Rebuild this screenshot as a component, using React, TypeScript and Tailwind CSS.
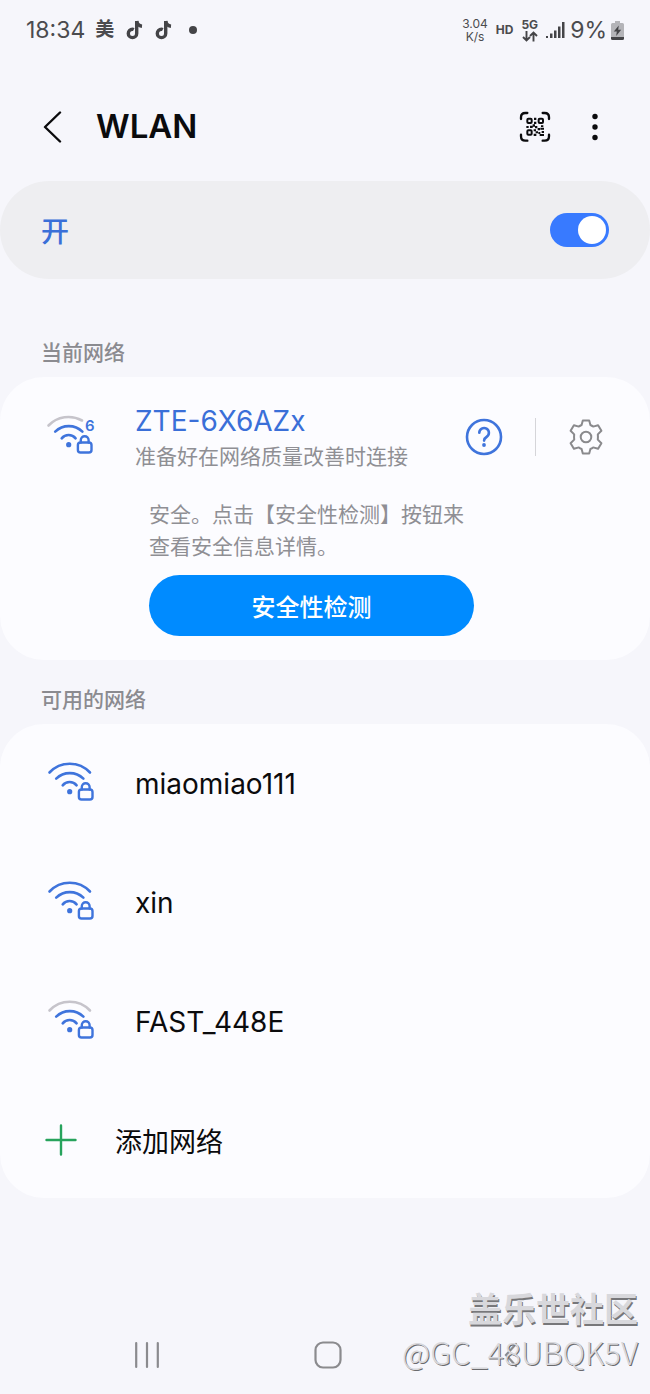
import React, { useState } from "react";

interface Network {
  name: string;
  strength: "full" | "medium";
}

const networks: Network[] = [
  { name: "miaomiao111", strength: "full" },
  { name: "xin", strength: "full" },
  { name: "FAST_448E", strength: "medium" },
];

interface WifiIconProps {
  strength: "full" | "medium";
  wifi6?: boolean;
}

const WifiIcon: React.FC<WifiIconProps> = ({ strength, wifi6 }) => {
  const outer = strength === "full" ? "#3f74dc" : "#c6c4cb";
  return (
    <svg
      className="mb-2 h-11 w-12 shrink-0 overflow-visible"
      viewBox="0 0 48 44"
      fill="none"
      stroke="#3f74dc"
      strokeWidth="2.6"
      strokeLinecap="round"
      aria-hidden="true"
    >
      {wifi6 ? (
        <path d="M2.5 14.5A27.7 27.7 0 0 1 36 9.5" stroke={outer} />
      ) : (
        <path d="M2.5 14.5A27.7 27.7 0 0 1 43 14.5" stroke={outer} />
      )}
      <path d="M9.2 20.6A19.6 19.6 0 0 1 36.4 20.6" />
      <path d="M15.7 27.3A9 9 0 0 1 29.6 27.3" />
      <circle cx="22.7" cy="33.7" r="2.6" fill="#3f74dc" stroke="none" />
      <rect x="31.9" y="31.5" width="13.6" height="10" rx="2.6" strokeWidth="2.4" />
      <path d="M34.8 31.5v-2.4a3.9 3.9 0 0 1 7.8 0v2.4" strokeWidth="2.4" />
      {wifi6 && (
        <text
          x="39"
          y="20"
          fontSize="15"
          fontWeight="600"
          fontFamily="Inter, sans-serif"
          fill="#3f74dc"
          stroke="none"
        >
          6
        </text>
      )}
    </svg>
  );
};

const NoteIcon = () => (
  <svg className="h-5 w-[18px]" viewBox="0 0 18 20" fill="none" stroke="#444447" strokeWidth="3.4" aria-hidden="true">
    <path d="M10.7 1v12.4a4.2 4.2 0 1 1-4.2-4.2c.5 0 .9 0 1.3.2" />
    <path d="M10.7 1c.3 3 2.2 4.9 5.3 5.2" />
  </svg>
);

const QrScanIcon = () => (
  <svg className="size-8" viewBox="0 0 96 96" fill="none" stroke="#0b0b0d" aria-hidden="true">
    <path
      d="M6 24v-5Q6 6 19 6h6M71 6h6q13 0 13 13v5M90 71v5q0 13-13 13h-6M25 89h-6Q6 89 6 76v-5"
      strokeWidth="7"
      strokeLinecap="round"
    />
    <g strokeWidth="6">
      <rect x="25" y="23" width="13" height="13" rx="3" />
      <rect x="59" y="23" width="13" height="13" rx="3" />
      <rect x="25" y="58" width="13" height="13" rx="3" />
    </g>
    <g fill="#0b0b0d" stroke="none">
      <path d="M45 20h7v7h-7zM45 32h7v7h-7zM22 45h7v6h-7zM33 44h8v7h-8zM41 40h7v7h-7zM48 45h7v7h-7zM56 51h7v7h-7zM64 50h11v6H64zM66 43h7v5h-7zM44 55h7v6h-7zM50 61h7v6h-7zM44 68h8v7h-8zM58 63h6v6h-6zM62 69h13v6H62zM68 60h7v6h-7z" />
    </g>
  </svg>
);

const GearIcon = () => (
  <svg
    className="size-9"
    viewBox="0 0 36 36"
    fill="none"
    stroke="#8a8a8d"
    strokeWidth="2"
    strokeLinejoin="round"
    aria-hidden="true"
  >
    <path d="M14.8 1.5h6.4l1.2 4.5q1.5.6 2.7 1.6l5-1.4 3.3 5.6-3.6 3.6q.3 2.600 0 5.200l3.600 3.600-3.300 5.600-5-1.400q-1.200 1-2.700 1.600l-1.200 4.500h-6.400l-1.200-4.500q-1.500-.6-2.700-1.600l-5 1.400-3.300-5.600 3.600-3.600q-.3-2.600 0-5.200l-3.600-3.600 3.300-5.600 5 1.400q1.200-1 2.700-1.600z" />
    <circle cx="18" cy="18" r="5.3" />
  </svg>
);

const StatusBar = () => (
  <div className="flex h-[60px] items-center justify-between px-[26px] text-[#4b4b4e]">
    <div className="flex items-center">
      <span className="text-[23px]">18:34</span>
      <span className="ml-[10px] text-[19px] font-bold">美</span>
      <span className="ml-3 flex gap-[11px]">
        <NoteIcon />
        <NoteIcon />
      </span>
      <span className="ml-4 size-2 rounded-full bg-[#444447]" />
    </div>
    <div className="flex items-center">
      <div className="text-center text-[12px] leading-[13px]">
        3.04
        <br />
        K/s
      </div>
      <span className="ml-2 text-[12px] font-bold">HD</span>
      <div className="ml-2 flex flex-col items-center text-[12px] leading-3 font-bold">
        5G
        <svg className="h-[11px] w-4" viewBox="0 0 16 11" fill="none" stroke="#444447" strokeWidth="1.9" aria-hidden="true">
          <path d="M4.500 0v9M1 6l3.500 3.500L8 6M11.500 10.500v-9M8 5l3.500-3.500L15 5" />
        </svg>
      </div>
      <svg className="ml-2 h-[18px] w-5" viewBox="0 0 20 18" fill="#444447" aria-hidden="true">
        <path d="M0 15h2v2H0zM4 12.500h2.500V17H4zM8 9.500h2.500V17H8zM12 5.500h2.500V17H12zM16 1h2.500v16H16z" />
      </svg>
      <span className="ml-1 text-[23px]">9%</span>
      <svg className="ml-1 h-[19px] w-[13px]" viewBox="0 0 13 19" aria-hidden="true">
        <path d="M4 0h5v2h2.500A1.500 1.500 0 0 1 13 3.500V16H0V3.500A1.500 1.500 0 0 1 1.500 2H4z" fill="#b4b4b8" />
        <path d="M0 16h13v1.500a1.500 1.500 0 0 1-1.500 1.500h-10A1.500 1.500 0 0 1 0 17.500z" fill="#444447" />
        <path d="M7.800 4.500 2.800 10.500h3l-.6 4.500 5-6.300H7.200z" fill="#444447" />
      </svg>
    </div>
  </div>
);

const App: React.FC = () => {
  const [enabled, setEnabled] = useState(true);

  return (
    <div className="relative flex min-h-screen flex-col bg-[#f6f6fb] font-[Inter,'Noto_Sans_CJK_SC',sans-serif] text-[#0b0b0d]">
      <StatusBar />

      <header className="mt-[30px] flex h-[74px] items-center pr-[49px] pl-[42px]">
        <button aria-label="返回">
          <svg
            className="h-8 w-5"
            viewBox="0 0 20 32"
            fill="none"
            stroke="#0b0b0d"
            strokeWidth="2.4"
            strokeLinecap="round"
            strokeLinejoin="round"
          >
            <path d="M18 1.5 3 16l15 14.5" />
          </svg>
        </button>
        <h1 className="ml-[34px] text-[33px] font-semibold">WLAN</h1>
        <button className="ml-auto" aria-label="扫描二维码">
          <QrScanIcon />
        </button>
        <button className="ml-[38px]" aria-label="更多选项">
          <svg className="h-7 w-3" viewBox="0 0 12 28" fill="#0b0b0d">
            <circle cx="6" cy="3.5" r="2.7" />
            <circle cx="6" cy="14" r="2.7" />
            <circle cx="6" cy="24.5" r="2.7" />
          </svg>
        </button>
      </header>

      <section className="mt-[17px] flex h-[98px] items-center justify-between rounded-full bg-[#eeeef1] px-[41px]">
        <label htmlFor="wlan" className="pt-1 text-[28px] font-medium text-[#3a6fd8]">
          开
        </label>
        <input
          id="wlan"
          type="checkbox"
          role="switch"
          checked={enabled}
          onChange={(e) => setEnabled(e.target.checked)}
          className="flex h-[34px] w-[59px] appearance-none items-center rounded-full bg-gray-400 px-[3px] before:size-7 before:rounded-full before:bg-white before:content-[''] checked:justify-end checked:bg-[#387aff]"
        />
      </section>

      <h2 className="mt-[58px] px-[41px] text-[21px] leading-8 font-medium text-[#8b8b90]">当前网络</h2>
      <section className="mt-2 rounded-[44px] bg-[#fcfcff] py-6">
        <div className="flex items-center px-[46px]">
          <WifiIcon strength="medium" wifi6 />
          <div className="ml-[41px]">
            <p className="text-[28px] leading-10 text-[#3a6fd8]">ZTE-6X6AZx</p>
            <p className="text-[21px] leading-8 text-[#8f8f94]">准备好在网络质量改善时连接</p>
          </div>
          <button className="ml-auto" aria-label="帮助">
            <svg className="size-[38px]" viewBox="0 0 38 38" fill="none" stroke="#3f74dc" strokeWidth="2.6" strokeLinecap="round">
              <circle cx="19" cy="19" r="17" />
              <path d="M14.300 14.800a4.800 4.800 0 1 1 7.200 4.200c-1.700 1-2.400 1.900-2.400 3.600" />
              <circle cx="19" cy="27" r="1.9" fill="#3f74dc" stroke="none" />
            </svg>
          </button>
          <span className="ml-8 h-[38px] w-px bg-[#d5d5d9]" />
          <button className="ml-8" aria-label="网络设置">
            <GearIcon />
          </button>
        </div>
        <div className="mt-[26px] px-[149px]">
          <p className="text-[21px] leading-8 whitespace-nowrap text-[#8f8f94]">
            安全。点击【安全性检测】按钮来
            <br />
            查看安全信息详情。
          </p>
          <button className="mt-3 h-[61px] w-[325px] rounded-full bg-[#008bff] pt-1 text-2xl font-medium text-white">
            安全性检测
          </button>
        </div>
      </section>

      <h2 className="mt-6 px-[41px] text-[21px] leading-8 font-medium text-[#8b8b90]">可用的网络</h2>
      <section className="mt-2 rounded-[44px] bg-[#fcfcff]">
        <ul>
          {networks.map((network) => (
            <li key={network.name}>
              <button className="flex h-[119px] w-full items-center pl-[47px] text-left text-[28px]">
                <WifiIcon strength={network.strength} />
                <span className="ml-10">{network.name}</span>
              </button>
            </li>
          ))}
        </ul>
        <button className="flex h-[117px] w-full items-center pl-[45px] text-left text-[27px]">
          <svg className="size-8" viewBox="0 0 32 32" stroke="#27a35c" strokeWidth="2.4" strokeLinecap="round" aria-hidden="true">
            <path d="M16 1.5v29M1.5 16h29" />
          </svg>
          <span className="ml-[38px] pt-2">添加网络</span>
        </button>
      </section>

      <nav className="mt-auto grid h-[78px] grid-cols-3 place-items-center pr-[50px] pl-14 text-[#8b8b8e]">
        <button aria-label="最近任务">
          <svg className="size-7" viewBox="0 0 28 28" stroke="currentColor" strokeWidth="2.2" strokeLinecap="round">
            <path d="M3.2 2v24M14 2v24M24.8 2v24" />
          </svg>
        </button>
        <button aria-label="主屏幕">
          <svg className="size-7" viewBox="0 0 28 28" fill="none" stroke="currentColor" strokeWidth="2.2">
            <rect x="1.5" y="1.5" width="25" height="25" rx="7.5" />
          </svg>
        </button>
        <button aria-label="返回上一页">
          <svg className="size-7" viewBox="0 0 28 28" fill="none" stroke="currentColor" strokeWidth="2.2" strokeLinecap="round">
            <path d="M21 3 11 14l10 11" />
          </svg>
        </button>
      </nav>

      <div className="pointer-events-none absolute right-3 bottom-5 text-right font-['Noto_Sans_CJK_SC',sans-serif] text-[#d8d8dc]">
        <p className="text-[34px] leading-[44px] font-bold [text-shadow:1px_2px_0_#77777a]">盖乐世社区</p>
        <p className="text-[31px] leading-[44px] font-light [text-shadow:1px_1px_0_#6b6b6e]">@GC_48UBQK5V</p>
      </div>
    </div>
  );
};

export default App;
